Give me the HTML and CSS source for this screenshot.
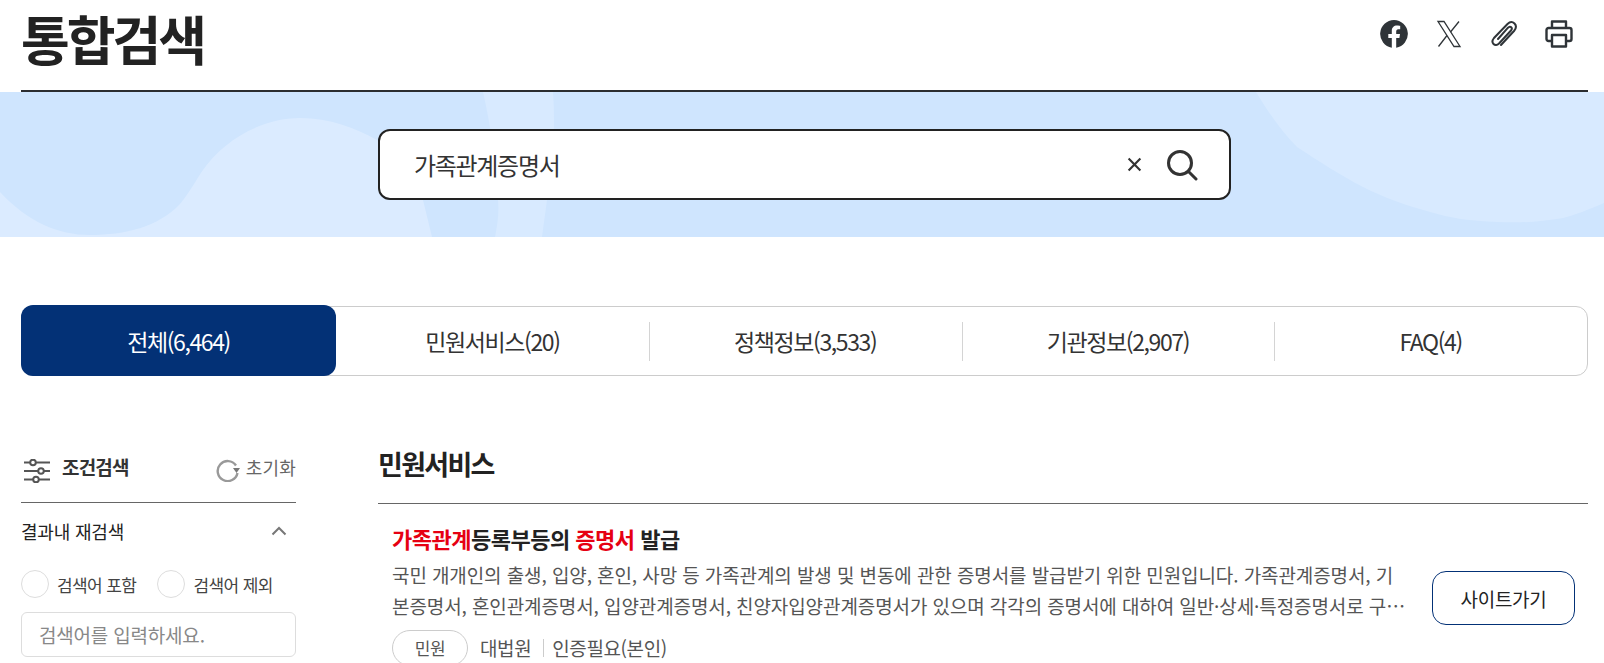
FILE: index.html
```html
<!DOCTYPE html>
<html lang="ko">
<head>
<meta charset="utf-8">
<title>통합검색</title>
<link rel="stylesheet" href="styles.css">
</head>
<body>
<header class="head">
  <h1 class="page-title">통합검색</h1>
  <div class="head-icons">
    <svg class="hicon" viewBox="0 0 28 28"><path fill="#2f3438" d="M14 0a14 14 0 0 0-2.200 27.800V18H8.300v-4h3.500v-3.100c0-3.500 2.100-5.400 5.300-5.400 1.500 0 3.100.3 3.100.3v3.400h-1.800c-1.700 0-2.200 1.100-2.200 2.200V14h3.800l-.6 4h-3.200v9.800A14 14 0 0 0 14 0z"/></svg>
    <svg class="hicon" viewBox="0 0 28 28"><path fill="none" stroke="#2f3438" stroke-width="1.300" d="M3 1.500h6l16 25h-6z"/><path fill="none" stroke="#2f3438" stroke-width="1.300" d="M24 1.500 15.500 12M12 15.500 3.500 26.500"/></svg>
    <svg class="hicon" viewBox="0 0 28 28"><path fill="none" stroke="#2f3438" stroke-width="2" stroke-linecap="round" d="M11 25 24 11c2.500-3 2.500-5.500.5-7.500s-4.500-2-7 .5L4 18c-2 2.500-2 4.500-.5 6s3.500 1.500 5.500-.5l12-13c1-1.200 1-2.500.2-3.300s-2-.7-3.200.5L8 19"/></svg>
    <svg class="hicon" viewBox="0 0 28 28"><path fill="none" stroke="#2f3438" stroke-width="2.400" stroke-linejoin="round" d="M7 8V1.500h14V8M7 21H3.500A2 2 0 0 1 1.500 19v-9a2 2 0 0 1 2-2h21a2 2 0 0 1 2 2v9a2 2 0 0 1-2 2H21M7 15h14v11.500H7z"/></svg>
  </div>
</header>
<section class="band">
  <svg class="band-art" viewBox="0 0 1604 145" preserveAspectRatio="none">
    <path fill="#dbebff" d="M0 100C28 130 58 143 90 143C125 143 158 135 180 112C190 100 196 88 203 78C222 50 260 26 300 26C330 26 355 36 377 48C400 60 415 85 423 108L432 145H0Z"/>
    <path fill="#d8eaff" d="M483 0H553C556 40 552 80 547 108L542 145H495C498 130 499 120 498 108C496 70 490 30 483 0Z"/>
    <path fill="#d8eaff" d="M1256 0H1604V111C1590 117 1575 123 1563 126C1540 130 1520 131 1497 130C1470 129 1450 126 1430 120C1405 113 1385 106 1363 95C1340 83 1320 70 1297 55C1280 38 1267 18 1256 0Z"/>
  </svg>
  <div class="searchbox">
    <span class="searchbox-text">가족관계증명서</span>
    <svg class="ic-x" viewBox="0 0 14 14"><path d="M1.500 1.500l11 11M12.500 1.500l-11 11" stroke="#333" stroke-width="2" fill="none"/></svg>
    <svg class="ic-search" viewBox="0 0 32 32"><circle cx="14" cy="14" r="11.500" fill="none" stroke="#333" stroke-width="3"/><path d="M22.500 22.500 30 30" stroke="#333" stroke-width="3" stroke-linecap="round"/></svg>
  </div>
</section>
<nav class="tabs">
  <a class="tab tab-active">전체(6,464)</a>
  <a class="tab tab-first">민원서비스(20)</a>
  <a class="tab">정책정보(3,533)</a>
  <a class="tab">기관정보(2,907)</a>
  <a class="tab">FAQ(4)</a>
</nav>
<main class="main">
  <aside class="side">
    <div class="side-head">
      <svg class="ic-filter" viewBox="0 0 26 24"><path d="M0 3.500h26M0 12h26M0 20.500h26" stroke="#555" stroke-width="2"/><circle cx="9" cy="3.500" r="2.800" fill="#fff" stroke="#555" stroke-width="2"/><circle cx="17" cy="12" r="2.800" fill="#fff" stroke="#555" stroke-width="2"/><circle cx="12" cy="20.500" r="2.800" fill="#fff" stroke="#555" stroke-width="2"/></svg>
      <strong class="side-title">조건검색</strong>
      <svg class="ic-reset" viewBox="0 0 24 24"><path d="M20 7.500A10 10 0 1 0 21.500 15" fill="none" stroke="#999" stroke-width="2.400"/><path d="M24 10h-7l3.500 5z" fill="#777"/></svg>
      <span class="reset-label">초기화</span>
    </div>
    <div class="side-row">
      <span>결과내 재검색</span>
      <svg class="ic-chev" viewBox="0 0 16 10"><path d="M1.500 8.500 8 2l6.500 6.500" fill="none" stroke="#777" stroke-width="2"/></svg>
    </div>
    <div class="radios">
      <span class="radio"></span><span class="radio-label">검색어 포함</span>
      <span class="radio"></span><span class="radio-label">검색어 제외</span>
    </div>
    <div class="side-input">검색어를 입력하세요.</div>
  </aside>
  <section class="results">
    <h2 class="results-title">민원서비스</h2>
    <article class="item">
      <div class="item-body">
        <h3 class="item-title"><em class="hit">가족관계</em>등록부등의 <em class="hit">증명서</em> 발급</h3>
        <p class="item-desc">국민 개개인의 출생, 입양, 혼인, 사망 등 가족관계의 발생 및 변동에 관한 증명서를 발급받기 위한 민원입니다. 가족관계증명서, 기본증명서, 혼인관계증명서, 입양관계증명서, 친양자입양관계증명서가 있으며 각각의 증명서에 대하여 일반·상세·특정증명서로 구분하여 발급받으실 수 있습니다.</p>
        <div class="item-meta">
          <span class="pill">민원</span>
          <span class="org">대법원</span>
          <span class="auth">인증필요(본인)</span>
        </div>
      </div>
      <a class="go">사이트가기</a>
    </article>
  </section>
</main>
</body>
</html>
```
FILE: styles.css
```css
* { box-sizing: border-box; }
html, body { margin: 0; padding: 0; height: 663px; overflow: hidden; background: #fff; }
body { font-family: "Noto Sans CJK KR", "Noto Sans", sans-serif; color: #222; }
h1, h2, h3, p { margin: 0; }
em { font-style: normal; }
.head { margin: 0 16px 0 21px; height: 92px; border-bottom: 2px solid #2b2d30; display: flex; justify-content: space-between; align-items: flex-start; }
.page-title { font-size: 53px; font-weight: 700; letter-spacing: -3px; line-height: 76px; color: #222; }
.head-icons { display: flex; gap: 27px; padding-top: 20px; padding-right: 15px; }
.hicon { width: 28px; height: 28px; display: block; }
.band { position: relative; height: 145px; background: #cfe5fe; display: flex; align-items: center; justify-content: center; padding-left: 5px; margin-bottom: 69px; }
.band-art { position: absolute; inset: 0; width: 100%; height: 100%; }
.searchbox { position: relative; width: 853px; height: 71px; background: #fff; border: 2px solid #222; border-radius: 12px; display: flex; align-items: center; padding: 0 31px 0 34px; }
.searchbox-text { flex: 1; font-size: 24px; letter-spacing: -1.300px; color: #333; }
.ic-x { width: 15px; height: 15px; margin-right: 24px; }
.ic-search { width: 32px; height: 32px; }
.tabs { margin: 0 16px 0 21px; height: 70px; display: grid; grid-template-columns: 314px repeat(4, 1fr); border: 1px solid #ccc; border-radius: 12px; }
.tab { position: relative; display: flex; align-items: center; justify-content: center; font-size: 23px; letter-spacing: -1.400px; color: #333; }
.tab::before { content: ""; position: absolute; left: 0; top: 15px; bottom: 14px; width: 1px; background: #d4d4d4; }
.tab-first::before, .tab-active::before { display: none; }
.tab-active { margin: -2px 0 -1px -1px; background: #033176; color: #fff; border-radius: 12px; }
.main { margin: 0 16px 0 21px; display: flex; gap: 82px; }
.side { width: 275px; flex: none; padding-top: 72px; }
.side-head { height: 55px; display: flex; align-items: center; border-bottom: 1px solid #666; padding-bottom: 11px; padding-left: 3px; }
.ic-filter { width: 26px; height: 24px; margin-right: 12px; margin-top: 2px; }
.side-title { flex: 1; font-size: 19px; letter-spacing: -.8px; font-weight: 700; color: #333; line-height: 24px; margin-top: -5px; }
.ic-reset { width: 24px; height: 24px; margin-right: 6px; margin-left: -2px; }
.reset-label { font-size: 18px; color: #666; letter-spacing: .2px; line-height: 24px; margin-top: -5px; }
.side-row { display: flex; align-items: center; justify-content: space-between; font-size: 18px; letter-spacing: -.2px; height: 56px; padding-right: 9px; }
.ic-chev { width: 16px; height: 10px; }
.radios { display: flex; align-items: center; height: 28px; margin-top: 11px; font-size: 17px; letter-spacing: -.6px; color: #444; }
.radio { width: 28px; height: 28px; flex: none; border: 1px solid #ddd; border-radius: 50%; margin-right: 8px; }
.radio-label { flex: none; white-space: nowrap; margin-right: 21px; }
.side-input { margin-top: 14px; height: 45px; border: 1px solid #ddd; border-radius: 6px; padding: 0 17px; display: flex; align-items: center; font-size: 19px; letter-spacing: -.2px; color: #888; }
.results { flex: 1; padding-top: 72px; }
.results-title { height: 56px; border-bottom: 1px solid #666; font-size: 27px; font-weight: 700; letter-spacing: -1.700px; color: #222; line-height: 32px; }
.item { display: flex; align-items: flex-start; padding: 18px 13px 0 14px; }
.item-body { width: 1016px; flex: none; }
.item-title { font-size: 22px; letter-spacing: -.5px; font-weight: 700; color: #222; line-height: 32px; }
.hit { color: #e60012; }
.item-desc { margin-top: 5px; font-size: 19px; letter-spacing: -.1px; line-height: 31px; color: #555; display: -webkit-box; -webkit-box-orient: vertical; -webkit-line-clamp: 2; overflow: hidden; }
.item-meta { margin-top: 9px; display: flex; align-items: center; font-size: 19px; line-height: 26px; color: #555; letter-spacing: -.4px; }
.pill { width: 76px; height: 36px; border: 1px solid #ccc; border-radius: 18px; display: flex; align-items: center; justify-content: center; font-size: 17px; margin-right: 12px; }
.org { padding-right: 12px; }
.auth { border-left: 1px solid #ccc; padding-left: 8px; line-height: 18px; }
.go { margin-left: auto; width: 143px; height: 54px; margin-top: 49px; border: 1px solid #033176; border-radius: 14px; display: flex; align-items: center; justify-content: center; font-size: 19px; color: #222; letter-spacing: -.3px; }
```
